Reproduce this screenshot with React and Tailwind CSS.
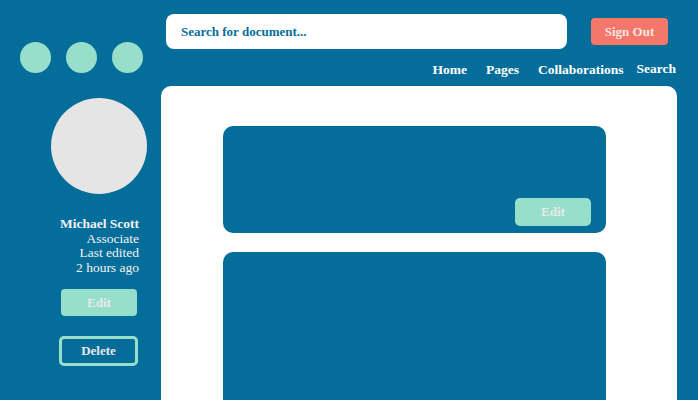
import React from 'react';

const serif = { fontFamily: '"Liberation Serif", "DejaVu Serif", serif' };

const navLinks = ['Home', 'Pages', 'Collaborations', 'Search'];

const Sidebar = () => (
  <div className="w-[161px] shrink-0 flex flex-col">
    <div className="flex gap-[15px] pl-[20px] pt-[42px]">
      <div className="w-[31px] h-[31px] rounded-full bg-[#98dfcb]"></div>
      <div className="w-[31px] h-[31px] rounded-full bg-[#98dfcb]"></div>
      <div className="w-[31px] h-[31px] rounded-full bg-[#98dfcb]"></div>
    </div>
    <div className="ml-[51px] mt-[25px] w-[96px] h-[96px] rounded-full bg-[#e5e5e5]"></div>
    <div className="mt-[23px] pr-[22px] text-right text-[13.5px] leading-[14.7px] text-[#f2f2f2]">
      <p className="font-bold">Michael Scott</p>
      <p>Associate</p>
      <p>Last edited</p>
      <p>2 hours ago</p>
    </div>
    <button className="ml-[61px] mt-[13px] w-[76px] h-[27px] rounded bg-[#98dfcb] text-[13px] font-bold text-[#e8e8e8]">
      Edit
    </button>
    <button className="ml-[59px] mt-[20px] w-[79px] h-[30px] rounded-[5px] border-[3px] border-[#98dfcb] text-[13px] font-bold text-[#e8e8e8]">
      Delete
    </button>
  </div>
);

const DocCard = ({ tall }) => (
  <div className={`w-[383px] rounded-[10px] bg-[#056d9a] flex items-end justify-end pb-[7px] pr-[15px] ${tall ? 'h-[200px]' : 'h-[107px]'}`}>
    {!tall && (
      <button className="w-[76px] h-[28px] rounded-[5px] bg-[#98dfcb] text-[13px] font-bold text-[#e8e8e8]">
        Edit
      </button>
    )}
  </div>
);

export default function App() {
  return (
    <div className="w-[698px] h-[400px] bg-[#056d9a] overflow-hidden flex" style={serif}>
      <Sidebar />
      <div className="flex-1 flex flex-col">
        <div className="flex items-start pt-[14px]">
          <div className="ml-[5px] w-[401px] h-[35px] rounded-[8px] bg-white flex items-center pl-[15px] text-[13px] font-bold text-[#056d9a]">
            Search for document...
          </div>
          <button className="ml-[24px] mt-[4px] w-[77px] h-[27px] rounded-[4px] bg-[#f4776a] text-[13px] font-bold text-[#f2e6e4]">
            Sign Out
          </button>
        </div>
        <nav className="flex justify-end gap-[19px] pr-[22px] mt-[13px] text-[13.5px] font-bold text-white leading-[16px]">
          {navLinks.map((link) => (
            <span key={link} className={link === 'Search' ? '-mt-[1px] -ml-[6px]' : ''}>{link}</span>
          ))}
        </nav>
        <div className="mt-[8px] mr-[21px] flex-1 rounded-t-[10px] bg-white pl-[62px] pt-[40px] flex flex-col gap-[19px]">
          <DocCard />
          <DocCard tall />
        </div>
      </div>
    </div>
  );
}
